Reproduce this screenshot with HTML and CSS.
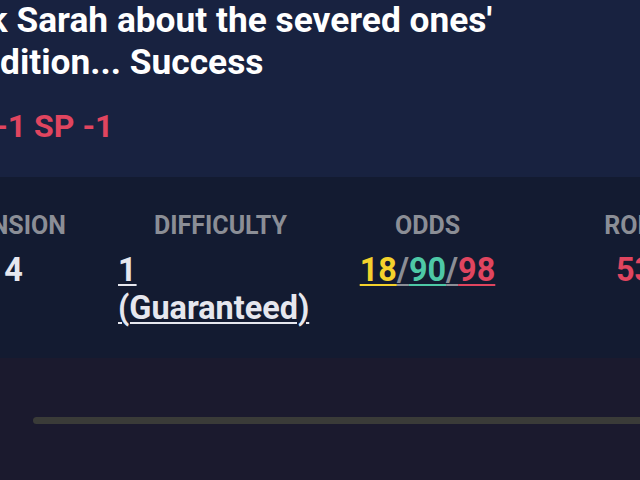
FILE: index.html
```html
<!DOCTYPE html>
<html lang="en">
<head>
    <meta charset="UTF-8">
    <title>Event Check</title>
    <meta name="viewport" content="width=device-width, initial-scale=1.0">
    <link rel="stylesheet" href="styles.css">
</head>
<body>
    <div class="event">
        <h1 class="event-title">Ask Sarah about the severed ones' condition... Success</h1>
        <div class="event-cost">HP -1 SP -1</div>
    </div>
    <div class="check">
        <div class="check-grid">
            <div class="check-head">TENSION</div>
            <div class="check-head">DIFFICULTY</div>
            <div class="check-head">ODDS</div>
            <div class="check-head">ROLL</div>

            <div class="check-val">4</div>
            <div class="check-val left"><span class="link">1 (Guaranteed)</span></div>
            <div class="check-val">
                <span class="odd yellow">18</span><span class="odd sep">/</span><span class="odd teal">90</span><span class="odd sep">/</span><span class="odd red">98</span>
            </div>
            <div class="check-val red">53</div>
        </div>
    </div>
    <div class="footer-area">
        <div class="scroll-track"></div>
    </div>
</body>
</html>
```

FILE: styles.css
```css
html, body {
    overflow: hidden;
}
body {
    margin: 0;
    height: 480px;
    background: #1b1a2e;
    color: #fff;
    font-family: Roboto, 'Noto Sans', Arial, sans-serif;
    font-weight: bold;
}
.event {
    background: #182240;
    height: 177px;
    margin-left: -58px;
    width: 720px;
}
.event-title {
    margin: 0;
    position: relative;
    top: -1px;
    font-size: 35.3px;
    line-height: 42px;
    text-indent: 5px;
    width: 600px;
    font-weight: bold;
}
.event-title::first-line {
    word-spacing: 0;
}
.event-cost {
    margin-top: 22px;
    margin-left: 2px;
    font-size: 32px;
    line-height: 40px;
    color: #e0455f;
}
.check {
    background: #131b31;
    height: 181px;
    box-sizing: border-box;
    padding-top: 34px;
}
.check-grid {
    display: grid;
    grid-template-columns: repeat(4, 207px);
    margin-left: -90px;
    row-gap: 10px;
}
.check-head {
    text-align: center;
    color: #8b8e96;
    font-size: 25px;
    line-height: 30px;
}
.check-val {
    text-align: center;
    color: #e6e7ee;
    font-size: 32.4px;
    line-height: 38px;
}
.check-val.left {
    text-align: left;
    padding-left: 1px;
}
.link {
    text-decoration: underline;
    text-decoration-thickness: 2px;
    text-underline-offset: 3px;
}
.odd {
    text-decoration: underline;
    text-decoration-thickness: 2px;
    text-underline-offset: 3px;
}
.yellow { color: #f4d22c; }
.teal { color: #4ec8a6; }
.red { color: #e0455f; }
.sep { color: #8b8e96; }
.footer-area {
    padding-top: 59px;
}
.scroll-track {
    margin-left: 33px;
    height: 7px;
    background: #3a3b38;
    border-radius: 4px 0 0 4px;
}
```
